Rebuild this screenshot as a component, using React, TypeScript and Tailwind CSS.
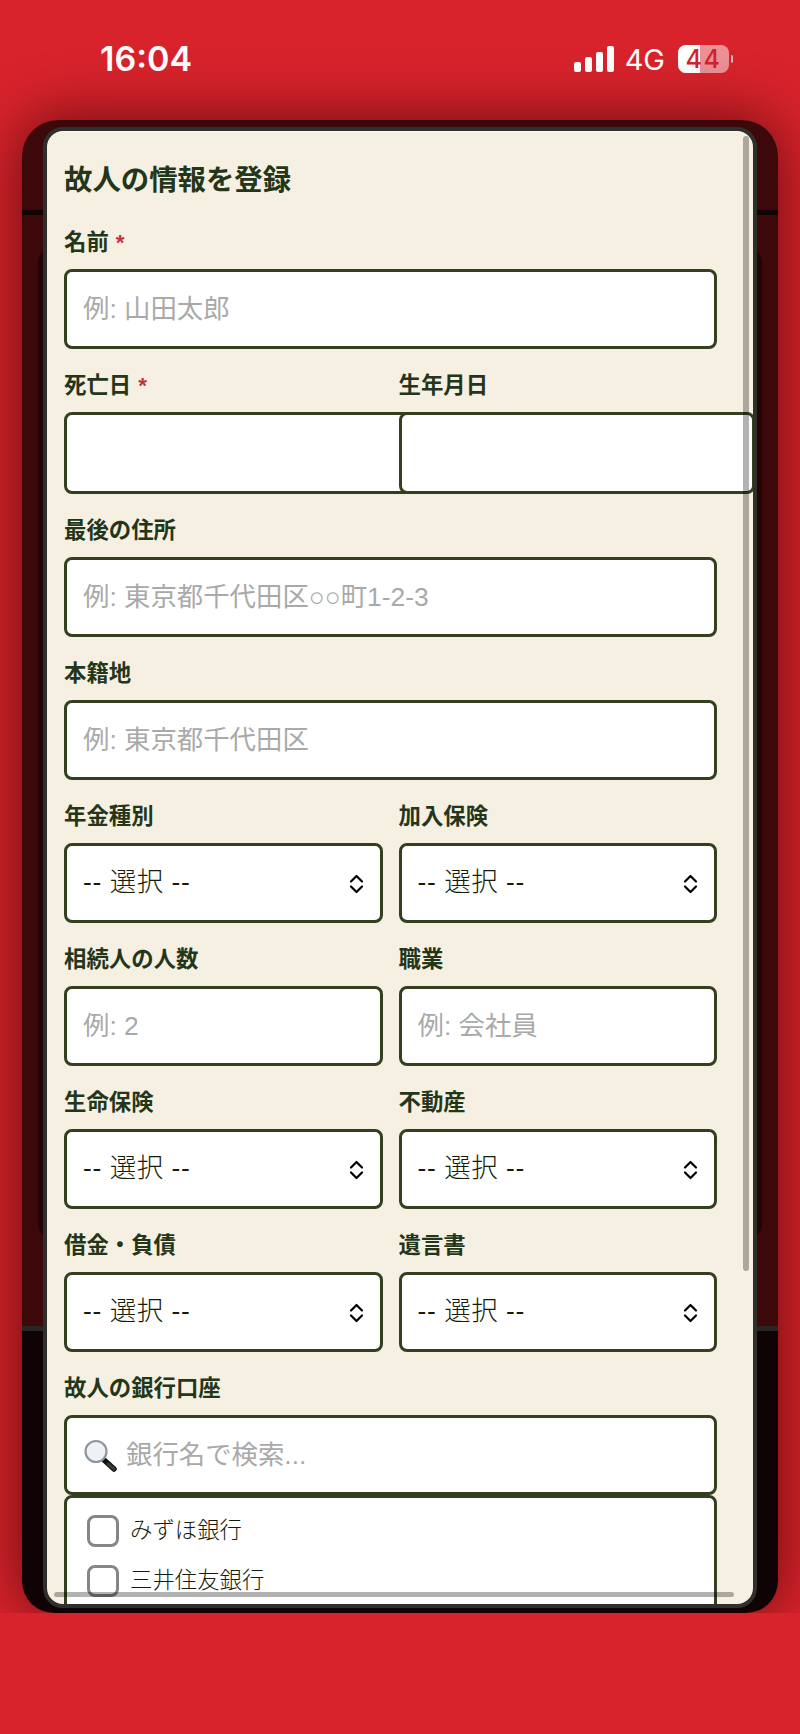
const fieldClass =
  "h-20 w-full rounded-lg border-[3px] border-[#343f20] bg-white px-4 text-[26.4px] text-[#2a3320] placeholder-[#a9a9a9] outline-none";

function Label({ text, required }: { text: string; required?: boolean }) {
  return (
    <label className="mb-[7px] block h-[33px] text-[22.4px] leading-[27px] font-bold text-[#24361a]">
      {text}
      {required && <span className="ml-[7px] text-[#c9303a]">*</span>}
    </label>
  );
}

function TextField({ label, placeholder, required }: { label: string; placeholder: string; required?: boolean }) {
  return (
    <div>
      <Label text={label} required={required} />
      <input type="text" placeholder={placeholder} className={fieldClass} />
    </div>
  );
}

function SelectField({ label }: { label: string }) {
  return (
    <div>
      <Label text={label} />
      <div className="relative">
        <select className={`${fieldClass} appearance-none font-light !text-[#141d0c] tracking-[0.6px]`}>
          <option>-- 選択 --</option>
        </select>
        <svg
          viewBox="0 0 15 20"
          className="pointer-events-none absolute top-[31px] right-[19px] h-5 w-[15px]"
          fill="none"
          stroke="#000"
          strokeWidth="2.2"
          strokeLinecap="round"
          strokeLinejoin="round"
        >
          <path d="M2 7.5 7.5 2 13 7.5" />
          <path d="M2 12.5 7.5 18 13 12.5" />
        </svg>
      </div>
    </div>
  );
}

function DateField({ label, required }: { label: string; required?: boolean }) {
  return (
    <div className="relative min-w-0">
      <Label text={label} required={required} />
      <input type="text" className={`${fieldClass} !h-[82px] !w-[356px]`} />
    </div>
  );
}

function SearchIcon() {
  return (
    <svg viewBox="0 0 34 34" className="pointer-events-none absolute top-[24px] left-[19px] size-[34px]">
      <path d="M20 20 31 30" stroke="#111" strokeWidth="5.5" strokeLinecap="round" />
      <path d="M25 25 31 30" stroke="#3a3a3a" strokeWidth="3" strokeLinecap="round" />
      <circle cx="13" cy="12.5" r="10.5" fill="#eef1f5" stroke="#8d96a0" strokeWidth="2.2" />
    </svg>
  );
}

function BankRow({ name }: { name: string }) {
  return (
    <div className="flex h-[50px] items-center gap-[11px]">
      <span className="size-8 shrink-0 rounded-lg border-[3px] border-[#868686] bg-white" />
      <span className="text-[22.4px] font-light text-[#141d0c]">{name}</span>
    </div>
  );
}

function StatusBar() {
  return (
    <div className="flex h-[127px] shrink-0 items-start justify-between pt-[38px] pr-[67px] pl-[100px] text-white">
      <span className="font-['Inter'] text-[34px] leading-[42px] font-semibold">16:04</span>
      <div className="flex h-[42px] items-center">
        <svg viewBox="0 0 40 26" className="h-[26px] w-10" fill="#fff">
          <rect x="0" y="16" width="7" height="10" rx="2" />
          <rect x="11" y="11" width="7" height="15" rx="2" />
          <rect x="22" y="6" width="7" height="20" rx="2" />
          <rect x="33" y="0" width="7" height="26" rx="2" />
        </svg>
        <span className="ml-[11px] font-['Inter'] text-[29px] leading-none font-normal">4G</span>
        <div className="relative ml-[13px] flex h-7 w-[51px] items-center justify-center rounded-lg bg-white/50">
          <div className="absolute inset-y-0 left-0 w-[22px] rounded-l-lg bg-white" />
          <span className="relative font-['Inter'] text-[25px] leading-none font-medium tracking-[1.5px] text-[#d2232e]">44</span>
        </div>
        <div className="ml-[2px] h-2 w-[2px] rounded-r-sm bg-white/70" />
      </div>
    </div>
  );
}

export default function App() {
  return (
    <div className="h-[1734px] w-[800px] overflow-hidden bg-[#d8232c] font-['Liberation_Sans','Noto_Sans_CJK_JP',sans-serif]">
      <div className="h-[1613px] overflow-hidden">
        <div className="flex h-full flex-col">
          <div className="-mb-[7px]">
            <StatusBar />
          </div>
          <div className="relative mx-[22px] h-[1493px] shrink-0 rounded-t-[36px] rounded-b-[32px] bg-[linear-gradient(180deg,#3c0809_0,#3c0809_90px,#120406_90px,#120406_95px,#3c0809_95px,#3c0809_1206px,#2a2525_1206px,#2a2525_1211px,#100305_1211px,#100305_100%)] px-[21px] pt-[7px] pb-[5px] shadow-[0_0_60px_rgba(50,0,0,0.7)]">
            {/* card of the page behind the modal */}
            <div className="absolute inset-x-[16px] top-[127px] h-[993px] rounded-2xl bg-[#230405]" />
            <div className="relative h-full overflow-hidden rounded-[20px] border-4 border-[#2f2f2c] bg-[#f5f0e1] pr-[36px] pl-[17px] shadow-[inset_0_1px_0_rgba(255,255,255,0.8)]">
              <h2 className="pt-[28px] pb-[28px] text-[28.4px] leading-[42px] font-bold text-[#24361a]">故人の情報を登録</h2>
              <div className="flex flex-col gap-[23px]">
                <TextField label="名前" required placeholder="例: 山田太郎" />
                <div className="grid grid-cols-2 gap-4">
                  <DateField label="死亡日" required />
                  <DateField label="生年月日" />
                </div>
                <TextField label="最後の住所" placeholder="例: 東京都千代田区○○町1-2-3" />
                <TextField label="本籍地" placeholder="例: 東京都千代田区" />
                <div className="grid grid-cols-2 gap-4">
                  <SelectField label="年金種別" />
                  <SelectField label="加入保険" />
                </div>
                <div className="grid grid-cols-2 gap-4">
                  <TextField label="相続人の人数" placeholder="例: 2" />
                  <TextField label="職業" placeholder="例: 会社員" />
                </div>
                <div className="grid grid-cols-2 gap-4">
                  <SelectField label="生命保険" />
                  <SelectField label="不動産" />
                </div>
                <div className="grid grid-cols-2 gap-4">
                  <SelectField label="借金・負債" />
                  <SelectField label="遺言書" />
                </div>
                <div>
                  <Label text="故人の銀行口座" />
                  <div className="relative">
                    <input type="text" placeholder="銀行名で検索..." className={`${fieldClass} !pl-[59px]`} />
                    <SearchIcon />
                  </div>
                  <div className="h-[200px] rounded-t-lg border-[3px] border-[#343f20] bg-white px-[20px] pt-2">
                    <BankRow name="みずほ銀行" />
                    <BankRow name="三井住友銀行" />
                  </div>
                </div>
              </div>
              {/* scrollbars */}
              <div className="absolute top-[5px] right-[4px] h-[1135px] w-[6px] rounded-full bg-black/30" />
              <div className="absolute bottom-[7px] left-[7px] h-[5px] w-[680px] rounded-full bg-black/30" />
            </div>
          </div>
        </div>
      </div>
    </div>
  );
}
